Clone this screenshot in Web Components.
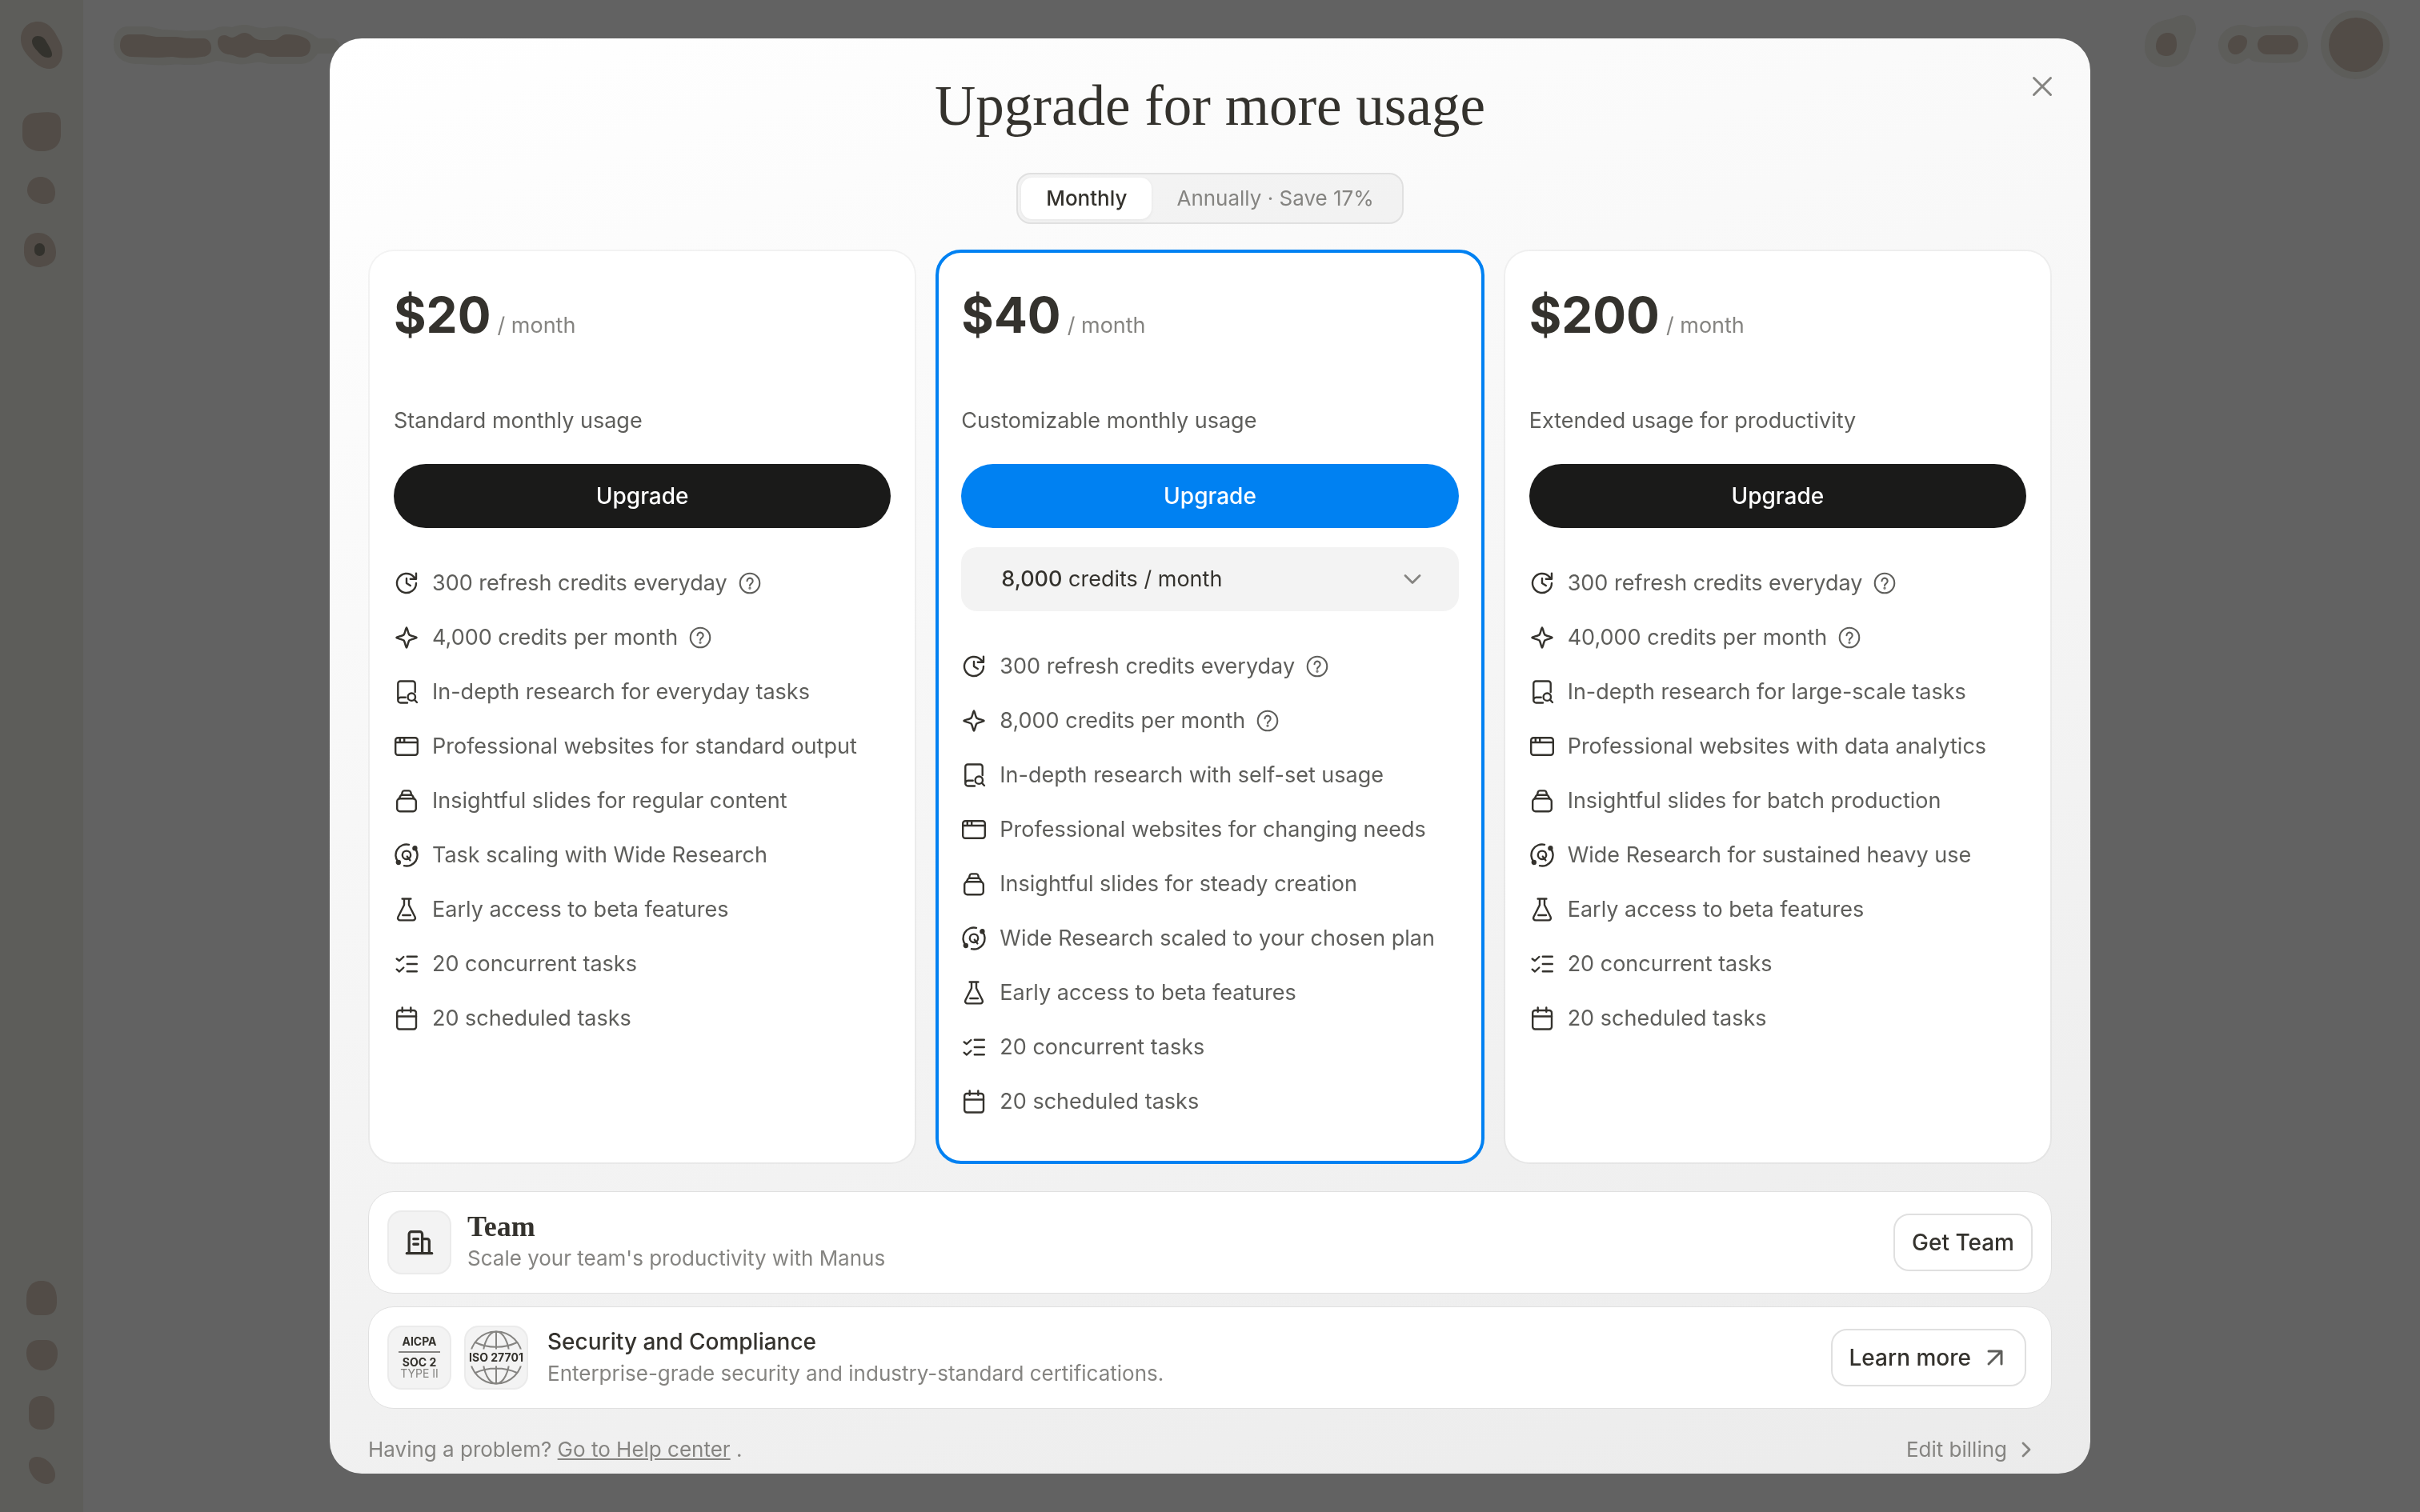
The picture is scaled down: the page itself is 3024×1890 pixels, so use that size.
<!DOCTYPE html>
<html lang="en">
<head>
<meta charset="utf-8">
<title>Upgrade</title>
<style>
  :root {
    --text-primary: #34322d;
    --text-secondary: #5e5e5b;
    --text-tertiary: #858481;
    --accent: #0081f2;
    --tile: #f3f3f3;
    --serif: "Liberation Serif", serif;
  }
  body {
    margin: 0;
    min-height: 100vh;
    background: #626262;
    color: var(--text-primary);
    font-family: Inter, "Liberation Sans", sans-serif;
    font-size: 27px;
    line-height: 44px;
  }
</style>
</head>
<body>
<app-backdrop></app-backdrop>

<upgrade-dialog heading="Upgrade for more usage">
  <billing-toggle slot="toggle"></billing-toggle>

  <plan-card price="$20" summary="Standard monthly usage">
    <feature-item icon="refresh" help>300 refresh credits everyday</feature-item>
    <feature-item icon="spark" help>4,000 credits per month</feature-item>
    <feature-item icon="research">In-depth research for everyday tasks</feature-item>
    <feature-item icon="browser">Professional websites for standard output</feature-item>
    <feature-item icon="slides">Insightful slides for regular content</feature-item>
    <feature-item icon="wide">Task scaling with Wide Research</feature-item>
    <feature-item icon="flask">Early access to beta features</feature-item>
    <feature-item icon="checks">20 concurrent tasks</feature-item>
    <feature-item icon="calendar">20 scheduled tasks</feature-item>
  </plan-card>

  <plan-card price="$40" summary="Customizable monthly usage" featured>
    <credit-select slot="options"></credit-select>
    <feature-item icon="refresh" help>300 refresh credits everyday</feature-item>
    <feature-item icon="spark" help>8,000 credits per month</feature-item>
    <feature-item icon="research">In-depth research with self-set usage</feature-item>
    <feature-item icon="browser">Professional websites for changing needs</feature-item>
    <feature-item icon="slides">Insightful slides for steady creation</feature-item>
    <feature-item icon="wide">Wide Research scaled to your chosen plan</feature-item>
    <feature-item icon="flask">Early access to beta features</feature-item>
    <feature-item icon="checks">20 concurrent tasks</feature-item>
    <feature-item icon="calendar">20 scheduled tasks</feature-item>
  </plan-card>

  <plan-card price="$200" summary="Extended usage for productivity">
    <feature-item icon="refresh" help>300 refresh credits everyday</feature-item>
    <feature-item icon="spark" help>40,000 credits per month</feature-item>
    <feature-item icon="research">In-depth research for large-scale tasks</feature-item>
    <feature-item icon="browser">Professional websites with data analytics</feature-item>
    <feature-item icon="slides">Insightful slides for batch production</feature-item>
    <feature-item icon="wide">Wide Research for sustained heavy use</feature-item>
    <feature-item icon="flask">Early access to beta features</feature-item>
    <feature-item icon="checks">20 concurrent tasks</feature-item>
    <feature-item icon="calendar">20 scheduled tasks</feature-item>
  </plan-card>

  <info-bar slot="bars" heading="Team" serif>
    <icon-tile slot="tiles"><line-icon name="building"></line-icon></icon-tile>
    Scale your team's productivity with Manus
    <outline-button slot="action">Get Team</outline-button>
  </info-bar>

  <info-bar slot="bars" heading="Security and Compliance">
    <icon-tile slot="tiles"><soc-badge></soc-badge></icon-tile>
    <icon-tile slot="tiles"><iso-badge></iso-badge></icon-tile>
    Enterprise-grade security and industry-standard certifications.
    <outline-button slot="action" arrow>Learn more</outline-button>
  </info-bar>

  <dialog-footer slot="footer"></dialog-footer>
</upgrade-dialog>

<script>
  const ICONS = {
    refresh: '<path d="M28 16a12 12 0 1 1-3.4-8.4l2.6 2.6M28 3.6v7.2h-7.2M16 10v6l4.8 3"/>',
    spark: '<path d="M16 3.4c1 0 1.900 7.6 3.500 9.100s9.100 2.500 9.100 3.500-7.500 2-9.100 3.500S17 28.600 16 28.600s-1.900-7.600-3.500-9.100S3.400 17 3.400 16s7.500-2 9.100-3.500S15 3.400 16 3.400z"/>',
    research: '<path d="M17 29.5H8.5a3.2 3.2 0 0 1-3.2-3.3V5.5a3 3 0 0 1 3-3h15.4a3 3 0 0 1 3 3V16M5.3 26.2a3.3 3.3 0 0 1 3.2-3.4h6.2"/><circle cx="22.3" cy="22.2" r="4.7"/><path d="M25.8 25.7l3.2 3.3"/>',
    browser: '<rect x="2.2" y="5.2" width="27.6" height="21.6" rx="3"/><path d="M2.2 11h27.6M7.8 5.2V11M13.2 5.2V11"/>',
    slides: '<rect x="4.2" y="13.2" width="23.6" height="16" rx="3.5"/><path d="M6.6 13.4l1.7-3.4a2.2 2.2 0 0 1 2-1.2h11.4a2.2 2.2 0 0 1 2 1.2l1.7 3.4M9.8 8.8l1-3.8a2.2 2.2 0 0 1 2.1-1.6h6.2A2.2 2.2 0 0 1 21.2 5l1 3.8"/>',
    wide: '<path d="M19 2.8A13.5 13.5 0 0 0 5.6 24.6M13 29.2A13.5 13.5 0 0 0 26.6 7.6"/><circle cx="5.8" cy="25" r="2" fill="currentColor"/><circle cx="26.4" cy="7.2" r="2" fill="currentColor"/><circle cx="16" cy="15.8" r="5.2"/><path d="M16.8 17.6l3.6 4.8"/>',
    flask: '<path d="M10.6 2.5h10.8M13 2.5v7.8L5.4 25.2a2.9 2.9 0 0 0 2.6 4.2h16a2.9 2.9 0 0 0 2.6-4.2L19 10.3V2.5M11.3 23h9.6"/>',
    checks: '<path d="M3.7 9.5L7 12l5.3-5M3.7 22.7L7 25.5l5.3-5M16.8 6.7h12M16.8 16h12M16.8 25.3h12"/>',
    calendar: '<rect x="4.2" y="6" width="23.8" height="23.5" rx="3"/><path d="M4.2 13.5H28M10.7 2.5v5.2M21.3 2.5v5.2"/>',
    help: '<circle cx="16" cy="16" r="14"/><path d="M12 12.8a4.1 4.1 0 1 1 6.3 3.5c-1.5 1-2.3 1.5-2.3 3"/><circle cx="16" cy="23" r=".6" fill="currentColor"/>',
    building: '<path d="M2 28.2h28M4.6 28.2V6.8a2.6 2.6 0 0 1 2.6-2.6h9.4a2.6 2.6 0 0 1 2.6 2.6v21.4M19.2 12.2h5.4a2.4 2.4 0 0 1 2.4 2.4v13.6M9.6 12.2h5M9.6 18h5"/>',
    close: '<path d="M5.5 5.5l21 21M26.5 5.5l-21 21"/>',
    down: '<path d="M7 11.5l9 9 9-9"/>',
    right: '<path d="M12 8l8 8-8 8"/>',
    arrow: '<path d="M8 8h16v16M23.5 8.5L8 24"/>'
  };

  function attach(el, html) {
    el.attachShadow({ mode: 'open' }).innerHTML = html;
  }

  class LineIcon extends HTMLElement {
    connectedCallback() {
      attach(this, `
        <style>
          :host { display: block; flex: none; width: var(--icon-size, 32px); height: var(--icon-size, 32px); }
          svg { display: block; width: 100%; height: 100%; fill: none; stroke: currentColor;
                stroke-width: var(--icon-stroke, 2.4); stroke-linecap: round; stroke-linejoin: round; }
        </style>
        <svg viewBox="0 0 32 32" aria-hidden="true">${ICONS[this.getAttribute('name')]}</svg>
      `);
    }
  }

  // Blurred-out app behind the dialog: rail on the left, bar on top
  class AppBackdrop extends HTMLElement {
    connectedCallback() {
      attach(this, `
        <style>
          :host { display: flex; min-height: 100vh; }
          nav { display: flex; flex-direction: column; justify-content: space-between; width: 104px; background: #5d5d5a; }
          header { flex: 1; display: flex; justify-content: space-between; align-items: flex-start; }
          svg { display: block; fill: #524c47; }
          .halo { fill: #5d5d5a; }
          .dark { fill: #33322d; }
        </style>
        <nav>
          <svg width="104" height="350" viewBox="0 0 104 350" aria-hidden="true">
            <path d="M26 49C26 36 35 27 47 27c12 0 19 8 24 18 4 7 7 12 7 20 0 12-7 21-16 21-10 0-17-6-23-12-8-8-13-16-13-25z"/>
            <path class="dark" d="M40 52c0-4 3-7 7-7 6 0 9 3 12 9 3 5 6 10 6 14 0 3-2 4-5 4-5 0-9-3-13-8-4-4-7-8-7-12z"/>
            <path d="M28 158c0-11 7-17 19-17 8-1 15-1 20 0 7 2 9 6 9 13v14c0 13-9 21-24 21-15 0-24-8-24-20z"/>
            <path d="M34 238c0-10 7-17 17-17 10 0 18 9 18 20 0 9-5 14-13 14-12 0-22-8-22-17z"/>
            <path d="M30 310c0-12 7-19 18-19 13 0 22 11 22 25 0 11-7 16-20 18-13 0-20-8-20-19z"/>
            <rect class="dark" x="43" y="304" width="13" height="16" rx="6.5"/>
          </svg>
          <svg width="104" height="290" viewBox="0 0 104 290" aria-hidden="true">
            <path d="M33 23C33 9 40 1 52 1c13 0 18 9 19 21v6c0 11-6 16-15 16h-9c-9 0-14-6-14-15z"/>
            <path d="M33 91c0-10 6-16 16-16h8c9 0 15 6 15 17 0 13-8 21-19 21-12 0-20-9-20-22z"/>
            <path d="M36 161c0-10 6-16 16-16s16 6 16 16v11c0 10-6 15-16 15s-16-5-16-15z"/>
            <path d="M36 231c0-6 4-10 10-10 12 0 23 12 23 23 0 7-5 11-11 11-10 0-22-11-22-24z"/>
          </svg>
        </nav>
        <header>
          <svg width="330" height="100" viewBox="104 0 330 100" aria-hidden="true">
            <path class="halo" d="M142 55c0-13 7-22 18-22h22c9 0 13 3 22 4 10 0 19 1 29 2 12-2 24 0 33-2 8-5 16-4 24-3 6-2 10-3 16-3 8 0 13 4 22 4 8 0 13-2 23-2 10 0 16 2 24 4 11 2 16 7 23 11h17c12 2 12 17 0 19h-18c-5 7-11 13-23 13h-35c-8 0-11-3-19-2-9 1-14 3-23 2-11-1-19-4-27-4-10 4-22 5-34 5-10 0-14-1-23 0-11 1-24 0-35-1-20 1-36-6-36-25z"/>
            <path d="M150 57c0-9 4-14 12-14h14c7 0 10 2 19 3h24c9 1 15 2 22 2h13c6 0 10 5 10 12s-5 11-12 11c-12 2-24 2-36 0-7 0-12 1-20 1-11 0-20-1-31-1-9 0-15-6-15-14z"/>
            <path d="M272 53c0-6 3-9 9-9 3 0 5 3 9 3 6-1 9-6 16-6 8 0 11 9 19 9h17c7 0 8-7 17-7 13 0 29 4 29 14 0 9-4 14-14 14h-35c-6 0-8-5-17-5-8 0-10 6-18 6-9 0-12-4-19-4-8-1-13-8-13-15z"/>
          </svg>
          <svg width="344" height="104" viewBox="2680 0 344 104" aria-hidden="true">
            <path class="halo" d="M2680 60c0-12 3-20 8-26 8-8 18-9 27-11 5-3 9-4 13-4 10 0 16 7 16 17 0 11-6 14-8 24-2 14-12 24-29 24-17 0-27-11-27-24z"/>
            <path class="halo" d="M2772 56c0-14 13-25 30-25 8 0 11 4 17 3 15-2 32-2 48-1 10 0 17 11 17 23 0 13-8 22-18 22-17 1-36 1-48-1-6-1-6-4-8-4-4 0-9 7-17 7-12 0-21-11-21-24z"/>
            <circle class="halo" cx="2943" cy="56" r="43"/>
            <path d="M2694 58c0-10 6-17 15-17 8 0 11 5 11 15 0 9-5 14-13 14s-13-5-13-12z"/>
            <path d="M2784 57c0-7 7-13 14-13 6 0 10 3 10 8 0 8-7 16-15 16-5 0-9-5-9-11z"/>
            <rect x="2821" y="44" width="51" height="24" rx="12"/>
            <circle cx="2944" cy="56" r="34"/>
          </svg>
        </header>
      `);
    }
  }

  class UpgradeDialog extends HTMLElement {
    connectedCallback() {
      attach(this, `
        <style>
          :host { position: fixed; inset: 48px; display: flex; justify-content: center; }
          section {
            position: relative;
            box-sizing: border-box;
            width: 100%;
            max-width: 2200px;
            padding: 40px 48px 0;
            overflow: hidden;
            border-radius: 40px;
            background: linear-gradient(163deg, #ffffff, #ebebeb);
          }
          h1 { margin: 0; font: 400 71px/88px var(--serif); text-align: center; }
          .toggle { display: flex; justify-content: center; margin: 40px 0 32px; }
          .plans { display: grid; grid-template-columns: repeat(3, 1fr); gap: 24px; }
          .bars { display: flex; flex-direction: column; gap: 16px; margin: 34px 0 28px; }
          .close {
            position: absolute; top: 36px; right: 36px;
            padding: 8px; border: 0; background: none; color: var(--text-tertiary);
            --icon-stroke: 3;
          }
        </style>
        <section role="dialog" aria-labelledby="title">
          <h1 id="title">${this.getAttribute('heading')}</h1>
          <div class="toggle"><slot name="toggle"></slot></div>
          <div class="plans"><slot></slot></div>
          <div class="bars"><slot name="bars"></slot></div>
          <slot name="footer"></slot>
          <button class="close" aria-label="Close"><line-icon name="close"></line-icon></button>
        </section>
      `);
    }
  }

  class BillingToggle extends HTMLElement {
    connectedCallback() {
      attach(this, `
        <style>
          :host { display: flex; padding: 4px; border: 2px solid #e0e0e0; border-radius: 18px; background: rgba(55, 53, 47, 0.04); }
          button {
            height: 52px; padding: 0 31px; border: 0; border-radius: 14px; background: none;
            font: 400 26px/52px Inter, sans-serif; color: var(--text-tertiary);
          }
          button[aria-pressed="true"] {
            background: #fff; color: var(--text-primary); font-weight: 500;
            box-shadow: 0 1px 4px rgba(0, 0, 0, 0.06);
          }
        </style>
        <button aria-pressed="true">Monthly</button>
        <button aria-pressed="false">Annually · Save 17%</button>
      `);
      const buttons = this.shadowRoot.querySelectorAll('button');
      buttons.forEach(b => b.addEventListener('click', () => {
        buttons.forEach(o => o.setAttribute('aria-pressed', String(o === b)));
      }));
    }
  }

  class PlanCard extends HTMLElement {
    connectedCallback() {
      attach(this, `
        <style>
          :host {
            box-sizing: border-box;
            display: block;
            padding: 46px 30px 54px;
            border: 2px solid rgba(0, 0, 0, 0.04);
            border-radius: 32px;
            background: #fff;
            background-clip: padding-box;
          }
          :host([featured]) { padding: 44px 28px 52px; border: 4px solid var(--accent); }
          .price {
            display: flex; align-items: baseline; gap: 8px; height: 68px; margin: 0 0 76px;
            font-size: 62px; line-height: 68px; font-weight: 700;
          }
          .price small { font-size: 27px; line-height: 44px; font-weight: 400; color: var(--text-tertiary); }
          .summary { margin: 0 0 32px; color: var(--text-secondary); }
          .upgrade {
            display: block; width: 100%; height: 80px; border: 0; border-radius: 40px;
            background: #1a1a19; color: #fff; font: 500 28px/44px Inter, sans-serif;
          }
          :host([featured]) .upgrade { background: var(--accent); }
          ::slotted([slot="options"]) { margin-top: 24px; }
          .features { display: flex; flex-direction: column; gap: 24px; margin-top: 47px; }
        </style>
        <p class="price">${this.getAttribute('price')}<small>/ month</small></p>
        <p class="summary">${this.getAttribute('summary')}</p>
        <button class="upgrade">Upgrade</button>
        <slot name="options"></slot>
        <div class="features" role="list"><slot></slot></div>
      `);
    }
  }

  class CreditSelect extends HTMLElement {
    connectedCallback() {
      attach(this, `
        <style>
          :host { display: grid; align-items: center; }
          select, line-icon { grid-area: 1 / 1; }
          select {
            appearance: none;
            appearance: base-select;
            box-sizing: border-box; width: 100%; height: 80px; padding: 0 50px;
            border: 0; border-radius: 20px; background: var(--tile);
            font: 400 27px/44px Inter, sans-serif; color: var(--text-primary);
          }
          select::picker-icon { display: none; }
          select button { display: block; text-align: left; }
          b { font-weight: 500; }
          line-icon {
            justify-self: end; margin-right: 42px; pointer-events: none; color: var(--text-tertiary);
            --icon-stroke: 2.8;
          }
        </style>
        <select aria-label="Credits per month">
          <button><selectedcontent></selectedcontent></button>
          <option selected><b>8,000</b> credits / month</option>
        </select>
        <line-icon name="down"></line-icon>
      `);
    }
  }

  class FeatureItem extends HTMLElement {
    connectedCallback() {
      this.setAttribute('role', 'listitem');
      attach(this, `
        <style>
          :host { display: flex; align-items: center; }
          .text { margin-left: 16px; color: var(--text-secondary); }
          .help { margin-left: 14px; padding: 0; border: 0; background: none; color: var(--text-secondary); --icon-size: 28px; }
        </style>
        <line-icon name="${this.getAttribute('icon')}"></line-icon>
        <span class="text"><slot></slot></span>
        ${this.hasAttribute('help') ? '<button class="help" aria-label="About credits"><line-icon name="help"></line-icon></button>' : ''}
      `);
    }
  }

  class IconTile extends HTMLElement {
    connectedCallback() {
      attach(this, `
        <style>
          :host {
            box-sizing: border-box; display: flex; align-items: center; justify-content: center;
            width: 80px; height: 80px; border: 2px solid #ebebeb; border-radius: 18px; background: var(--tile);
            --icon-size: 36px; --icon-stroke: 2.9;
          }
        </style>
        <slot></slot>
      `);
    }
  }

  class SocBadge extends HTMLElement {
    connectedCallback() {
      attach(this, `
        <style>
          :host { display: block; width: 52px; font-size: 14px; line-height: 14px; text-align: center; }
          b, span { display: block; font-weight: 700; }
          span { font-weight: 400; color: var(--text-tertiary); }
          hr { margin: 5px 0; border: 0; height: 2px; background: var(--text-tertiary); }
        </style>
        <b>AICPA</b><hr><b>SOC 2</b><span>TYPE II</span>
      `);
    }
  }

  class IsoBadge extends HTMLElement {
    connectedCallback() {
      attach(this, `
        <style>
          :host { display: grid; place-items: center; }
          svg, b { grid-area: 1 / 1; }
          svg { fill: none; stroke: var(--text-tertiary); stroke-width: 2; }
          b { font-size: 14px; line-height: 14px; font-weight: 700; white-space: nowrap; }
        </style>
        <svg width="76" height="76" viewBox="2 2 76 76" aria-hidden="true">
          <clipPath id="bands"><path d="M0 0h80v29.5H0zM0 50.5h80V80H0z"/></clipPath>
          <g clip-path="url(#bands)">
            <circle cx="40" cy="40" r="32.5"/>
            <ellipse cx="40" cy="40" rx="16.5" ry="32.5"/>
            <path d="M40 7.5v65M14 21c15 7.5 37 7.5 52 0M14 59c15-7.5 37-7.5 52 0"/>
          </g>
        </svg>
        <b>ISO 27701</b>
      `);
    }
  }

  class OutlineButton extends HTMLElement {
    connectedCallback() {
      const arrow = this.hasAttribute('arrow');
      attach(this, `
        <style>
          :host { display: block; }
          :host([arrow]) { margin-right: 8px; }
          button {
            box-sizing: border-box; display: flex; align-items: center; gap: 14px;
            height: 72px; padding: 0 21px; border: 2px solid #e0e0e0; border-radius: 20px; background: #fff;
            font: 500 28px/44px Inter, sans-serif; color: var(--text-primary);
          }
          line-icon { color: var(--text-secondary); --icon-stroke: 3; }
        </style>
        <button><slot></slot>${arrow ? '<line-icon name="arrow"></line-icon>' : ''}</button>
      `);
    }
  }

  class InfoBar extends HTMLElement {
    connectedCallback() {
      attach(this, `
        <style>
          :host {
            box-sizing: border-box; display: flex; align-items: center; min-height: 128px;
            padding: 0 23px; border: 1px solid #e0e0e0; border-radius: 32px; background: #fff;
          }
          .tiles { display: flex; gap: 16px; }
          .copy { flex: 1; margin-left: 24px; }
          h2 { margin: 0; font-size: 28px; line-height: 40px; font-weight: 500; }
          p { margin: 0; font-size: 26px; line-height: 40px; color: var(--text-tertiary); }
          :host([serif]) .copy { margin-left: 20px; }
          :host([serif]) h2 { font: 700 36px/40px var(--serif); }
        </style>
        <div class="tiles"><slot name="tiles"></slot></div>
        <div class="copy">
          <h2>${this.getAttribute('heading')}</h2>
          <p><slot></slot></p>
        </div>
        <slot name="action"></slot>
      `);
    }
  }

  class DialogFooter extends HTMLElement {
    connectedCallback() {
      attach(this, `
        <style>
          :host { display: flex; justify-content: space-between; align-items: center; font-size: 26px; line-height: 46px; color: var(--text-tertiary); }
          a { color: inherit; }
          .billing { display: flex; align-items: center; gap: 8px; padding-right: 16px; text-decoration: none; }
          line-icon { --icon-stroke: 2.8; }
        </style>
        <span>Having a problem? <a href="#help">Go to Help center</a> .</span>
        <a class="billing" href="#billing">Edit billing <line-icon name="right"></line-icon></a>
      `);
    }
  }

  customElements.define('line-icon', LineIcon);
  customElements.define('app-backdrop', AppBackdrop);
  customElements.define('billing-toggle', BillingToggle);
  customElements.define('credit-select', CreditSelect);
  customElements.define('feature-item', FeatureItem);
  customElements.define('plan-card', PlanCard);
  customElements.define('icon-tile', IconTile);
  customElements.define('soc-badge', SocBadge);
  customElements.define('iso-badge', IsoBadge);
  customElements.define('outline-button', OutlineButton);
  customElements.define('info-bar', InfoBar);
  customElements.define('dialog-footer', DialogFooter);
  customElements.define('upgrade-dialog', UpgradeDialog);
</script>
</body>
</html>
